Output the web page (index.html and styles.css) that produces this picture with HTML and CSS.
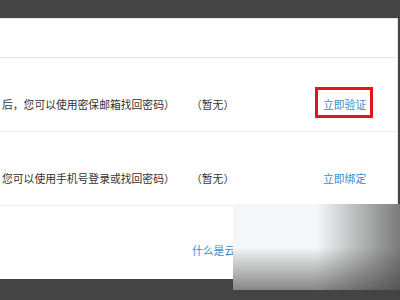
FILE: index.html
```html
<!DOCTYPE html>
<html lang="zh-CN">
<head>
  <meta charset="UTF-8" />
  <title>账号安全</title>
  <link rel="stylesheet" href="styles.css">
</head>
<body>

  <div class="topbar"></div>

  <div class="panel">
    <div class="row head"></div>

    <div class="row">
      <div class="desc">后，您可以使用密保邮箱找回密码）</div>
      <div class="status">（暂无）</div>
      <div class="action"><a class="link marked" href="#">立即验证</a></div>
    </div>

    <div class="row">
      <div class="desc">您可以使用手机号登录或找回密码）</div>
      <div class="status">（暂无）</div>
      <div class="action"><a class="link" href="#">立即绑定</a></div>
    </div>

    <div class="row last">
      <div class="desc"></div>
      <div class="help"><a class="link" href="#">什么是云帐号？</a></div>
    </div>
  </div>

  <div class="bottombar"></div>

  <!-- blurred watermark over the lower right corner -->
  <div class="smudge"></div>

</body>
</html>
```

FILE: styles.css
```css
body {
  margin: 0;
  width: 400px;
  height: 300px;
  overflow: hidden;
  position: relative;
  background: #444;
  font-family: "Noto Sans CJK SC", "Noto Sans", sans-serif;
  font-size: 10.8px;
  color: #333;
}

.topbar {
  height: 18px;
  background: #444;
}

.panel {
  width: 397px;
  height: 260px;
  background: #fff;
  border-top: 1px solid #dfe5ea;
  border-right: 1px solid #e6e6e6;
}

.row {
  height: 74px;
  box-sizing: border-box;
  padding-top: 38px;
  display: flex;
  line-height: 16px;
  border-bottom: 1px solid #ececec;
}

.row.head {
  height: 39px;
  padding-top: 0;
  border-bottom-color: #e1e7ec;
}

.row.last {
  border-bottom: none;
  padding-top: 36px;
}

.desc {
  width: 189px;
  padding-left: 2px;
  white-space: nowrap;
  overflow: hidden;
}

.status {
  width: 132px;
  white-space: nowrap;
}

.help {
  padding-left: 1px;
  white-space: nowrap;
}

.link {
  color: #3a8bcb;
  text-decoration: none;
  white-space: nowrap;
}

.marked {
  position: relative;
}

.marked::after {
  content: "";
  position: absolute;
  top: -9px;
  bottom: -6px;
  left: -8px;
  right: -7px;
  border: 3px solid #e3141b;
}

.bottombar {
  height: 21px;
  background: #444;
}

.smudge {
  position: absolute;
  left: 233px;
  top: 204px;
  width: 167px;
  height: 86px;
  background:
    linear-gradient(to bottom, rgba(60, 60, 60, 0) 50%, rgba(60, 60, 60, 0.6) 100%),
    linear-gradient(to right, rgba(70, 70, 70, 0) 50%, rgba(70, 70, 70, 0.7) 100%),
    #f5f6f7;
}
```
